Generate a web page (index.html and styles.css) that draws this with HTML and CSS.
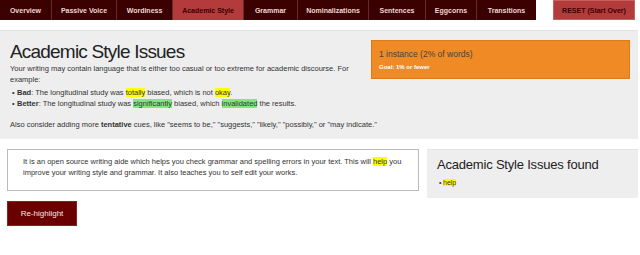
FILE: index.html
```html
<!DOCTYPE html>
<html>
<head>
<meta charset="utf-8">
<link rel="stylesheet" href="styles.css">
</head>
<body>
<div class="page">
  <nav class="topbar">
    <ul class="tabs">
      <li class="tab" style="width:52px">Overview</li>
      <li class="tab" style="width:65px">Passive Voice</li>
      <li class="tab" style="width:56px">Wordiness</li>
      <li class="tab active" style="width:71px">Academic Style</li>
      <li class="tab" style="width:54px">Grammar</li>
      <li class="tab" style="width:71px">Nominalizations</li>
      <li class="tab" style="width:57px">Sentences</li>
      <li class="tab" style="width:51px">Eggcorns</li>
      <li class="tab" style="width:59px">Transitions</li>
    </ul>
    <button class="reset">RESET (Start Over)</button>
  </nav>

  <section class="intro">
    <div class="intro-text">
      <h1>Academic Style Issues</h1>
      <p>Your writing may contain language that is either too casual or too extreme for academic discourse. For example:</p>
      <ul class="examples">
        <li><b>Bad</b>: The longitudinal study was <span class="hl-y">totally</span> biased, which is not <span class="hl-y">okay</span>.</li>
        <li><b>Better</b>: The longitudinal study was <span class="hl-g">significantly</span> biased, which <span class="hl-g">invalidated</span> the results.</li>
      </ul>
      <p class="also">Also consider adding more <b>tentative</b> cues, like "seems to be," "suggests," "likely," "possibly," or "may indicate."</p>
    </div>
    <div class="stat">
      <div class="stat-main">1 instance (2% of words)</div>
      <div class="stat-goal">Goal: 1% or fewer</div>
    </div>
  </section>

  <section class="work">
    <div class="left">
      <div class="editor">It is an open source writing aide which helps you check grammar and spelling errors in your text. This will <span class="hl-y">help</span> you improve your writing style and grammar. It also teaches you to self edit your works.</div>
      <button class="rehighlight">Re-highlight</button>
    </div>
    <aside class="found">
      <h2>Academic Style Issues found</h2>
      <ul class="found-list">
        <li><span class="hl-y">help</span></li>
      </ul>
    </aside>
  </section>
</div>
</body>
</html>
```

FILE: styles.css
```css
* { box-sizing: border-box; }
html, body { margin: 0; padding: 0; background: #fff; }
body {
  font-family: "Liberation Sans", Arial, sans-serif;
  color: #333;
  font-size: 7.5px;
}
.page { width: 638px; }

.topbar {
  display: flex;
  justify-content: space-between;
  height: 20px;
}
.tabs {
  display: flex;
  list-style: none;
  margin: 0;
  padding: 0;
  background: #3b0000;
}
.tab {
  display: flex;
  align-items: center;
  justify-content: center;
  height: 20px;
  color: #eed6d6;
  font-weight: bold;
  font-size: 7px;
  border-right: 1px solid #6a2a2a;
  white-space: nowrap;
}
.tab:last-child { border-right: none; }
.tab.active { background: #b33b3b; color: #3b0000; }
.reset {
  width: 82px;
  height: 20px;
  margin: 0 3px 0 0;
  background: #b33b3b;
  border: 1px solid #c86060;
  color: #3b0000;
  font-family: inherit;
  font-weight: bold;
  font-size: 7px;
  padding: 0;
}

.intro {
  margin-top: 10px;
  background: #eee;
  border-top: 1px solid #e2e2e2;
  display: flex;
  justify-content: space-between;
  align-items: flex-start;
  padding: 9px 8px 9px 10px;
}
.intro-text { flex: 1; min-width: 0; }
h1 {
  font-weight: normal;
  font-size: 19px;
  letter-spacing: -0.8px;
  margin: 1px 0 0 0;
  line-height: 22px;
  color: #222;
}
.intro-text p { margin: 0; line-height: 11.4px; }
.examples { margin: 1px 0 0 0; padding-left: 2px; line-height: 11.4px; list-style: none; }
.examples li::before {
  content: "\2022";
  display: inline-block;
  width: 5px;
}
.intro-text p.also { margin-top: 9px; white-space: nowrap; }
.hl-y { background: #ffff00; }
.hl-g { background: #7ee87e; }

.stat {
  flex: 0 0 259px;
  height: 39px;
  background: #f08a24;
  border: 1px solid #e07a18;
  padding: 7px 7px 0 7px;
}
.stat-main { font-size: 8.5px; color: #444; line-height: 12px; }
.stat-goal { font-size: 6px; font-weight: bold; color: #fff; margin-top: 3px; line-height: 8px; }

.work {
  display: flex;
  justify-content: space-between;
  margin-top: 10px;
}
.left { width: 420px; padding-left: 7px; }
.editor {
  width: 412px;
  height: 42px;
  border: 1px solid #bbb;
  padding: 6px 8px 0 15px;
  line-height: 11px;
  background: #fff;
}
.rehighlight {
  margin-top: 10px;
  width: 70px;
  height: 25px;
  background: #6b0000;
  border: 1px solid #8a2020;
  color: #f5e5e5;
  font-family: inherit;
  font-size: 8px;
  padding: 0;
}
.found {
  width: 211px;
  height: 49px;
  background: #eee;
  border-top: 1px solid #e4e4e4;
  padding: 7px 10px;
}
h2 {
  font-weight: normal;
  font-size: 13px;
  letter-spacing: -0.2px;
  margin: 0;
  line-height: 16px;
  color: #222;
}
.found-list { margin: 5px 0 0 0; padding-left: 2px; font-size: 7px; line-height: 10px; list-style: none; }
.found-list li::before {
  content: "\2022";
  display: inline-block;
  width: 4px;
}
```
